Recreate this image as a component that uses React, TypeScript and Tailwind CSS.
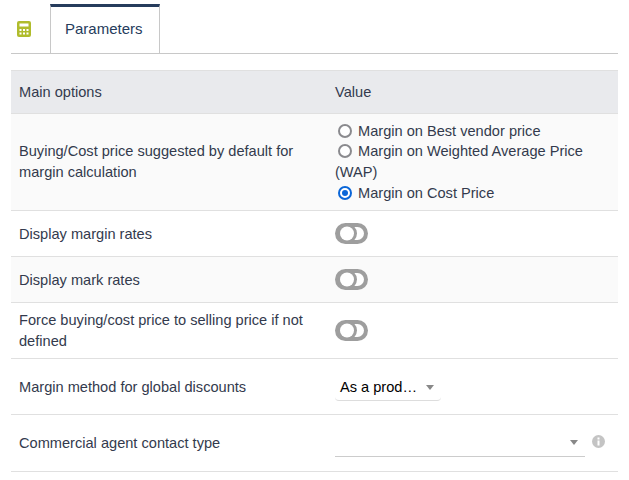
import React from 'react';

const Toggle = () => (
  <svg className="block" width="33" height="21" viewBox="0 0 33 21">
    <rect x="0" y="0" width="33" height="21" rx="10.5" fill="#9e9e9e" />
    <rect x="4" y="4" width="25" height="13" rx="6.5" fill="#fff" />
    <circle cx="12" cy="10.5" r="10" fill="#9e9e9e" />
    <circle cx="12" cy="10.5" r="7" fill="#fff" />
  </svg>
);

const Radio = ({ checked = false }: { checked?: boolean }) => (
  <span className={`relative top-[1px] ml-[3px] mr-[6px] inline-block h-[14px] w-[14px] rounded-full border-2 align-[-1px] bg-white ${checked ? 'border-[#0a66d8]' : 'border-[#8a8a8e]'}`}>
    {checked && <span className="absolute left-[2px] top-[2px] h-[6px] w-[6px] rounded-full bg-[#0a66d8]" />}
  </span>
);

const Caret = () => <span className="h-0 w-0 border-x-[4px] border-t-[5px] border-x-transparent border-t-[#888]" />;

export default function App() {
  return (
    <div className="h-[480px] w-[629px] overflow-hidden bg-white text-[14.6px] leading-[21px] text-[#333a4d]" style={{ fontFamily: '"Liberation Sans", Arial, sans-serif' }}>
      <div className="mx-[11px] mt-[4px] flex h-[50px] border-b border-[#c8c8c8]">
        <div className="flex w-[39px] items-center pl-[6px]">
          <svg width="14" height="16" viewBox="0 0 14 16">
            <rect x="0" y="0" width="14" height="16" rx="2" fill="#b0bc2c" />
            <rect x="2.5" y="2.5" width="9" height="3" fill="#fff" />
            <rect x="2.5" y="8" width="2" height="2" fill="#fff" />
            <rect x="6" y="8" width="2" height="2" fill="#fff" />
            <rect x="9.5" y="8" width="2" height="2" fill="#fff" />
            <rect x="2.5" y="11.5" width="2" height="2" fill="#fff" />
            <rect x="6" y="11.5" width="2" height="2" fill="#fff" />
            <rect x="9.5" y="11.5" width="2" height="2" fill="#fff" />
          </svg>
        </div>
        <div className="flex w-[110px] items-center border-x border-t-[3px] border-x-[#c8c8c8] border-t-[#263c5c] pb-[3px] pl-[14px] text-[15px] text-[#263c5c]">Parameters</div>
      </div>

      <div className="mx-[11px] mt-[16px] flex flex-col">
        <div className="flex h-[44px] items-center border-y border-[#e0e0e0] bg-[#e9eaed] pl-[8px]">
          <div className="w-[316px]">Main options</div>
          <div>Value</div>
        </div>
        <div className="flex h-[97px] items-center border-b border-[#e0e0e0] bg-[#fafafa] pl-[8px]">
          <div className="w-[316px] pr-[20px]">Buying/Cost price suggested by default for margin calculation</div>
          <div className="w-[270px] leading-[20.6px]">
            <div><Radio />Margin on Best vendor price</div>
            <div><Radio />Margin on Weighted Average Price (WAP)</div>
            <div><Radio checked />Margin on Cost Price</div>
          </div>
        </div>
        <div className="flex h-[46px] items-center border-b border-[#e0e0e0] pl-[8px]">
          <div className="w-[316px] pt-[2px]">Display margin rates</div>
          <Toggle />
        </div>
        <div className="flex h-[46px] items-center border-b border-[#e0e0e0] bg-[#fafafa] pl-[8px]">
          <div className="w-[316px] pt-[2px]">Display mark rates</div>
          <Toggle />
        </div>
        <div className="flex h-[56px] items-center border-b border-[#e0e0e0] pl-[8px]">
          <div className="w-[316px] pr-[20px]">Force buying/cost price to selling price if not defined</div>
          <Toggle />
        </div>
        <div className="flex h-[56px] items-center border-b border-[#e0e0e0] pl-[8px]">
          <div className="w-[316px] pt-[2px]">Margin method for global discounts</div>
          <div className="flex h-[28px] w-[106px] items-center justify-between rounded-b-[4px] border-b border-[#ddd] pl-[5px] pr-[7px] pt-[2px] text-black">
            <span>As a prod…</span>
            <Caret />
          </div>
        </div>
        <div className="flex h-[57px] items-center border-b border-[#e0e0e0] pl-[8px]">
          <div className="w-[316px]">Commercial agent contact type</div>
          <div className="flex h-[28px] w-[250px] items-center justify-end border-b border-[#ccc] pr-[7px]">
            <Caret />
          </div>
          <svg className="mb-[3px] ml-[7px]" width="13" height="13" viewBox="0 0 13 13">
            <circle cx="6.5" cy="6.5" r="6.5" fill="#c4c4c4" />
            <rect x="5.5" y="2.5" width="2" height="2" fill="#fff" />
            <rect x="5.5" y="5.5" width="2" height="5" fill="#fff" />
          </svg>
        </div>
      </div>
    </div>
  );
}
